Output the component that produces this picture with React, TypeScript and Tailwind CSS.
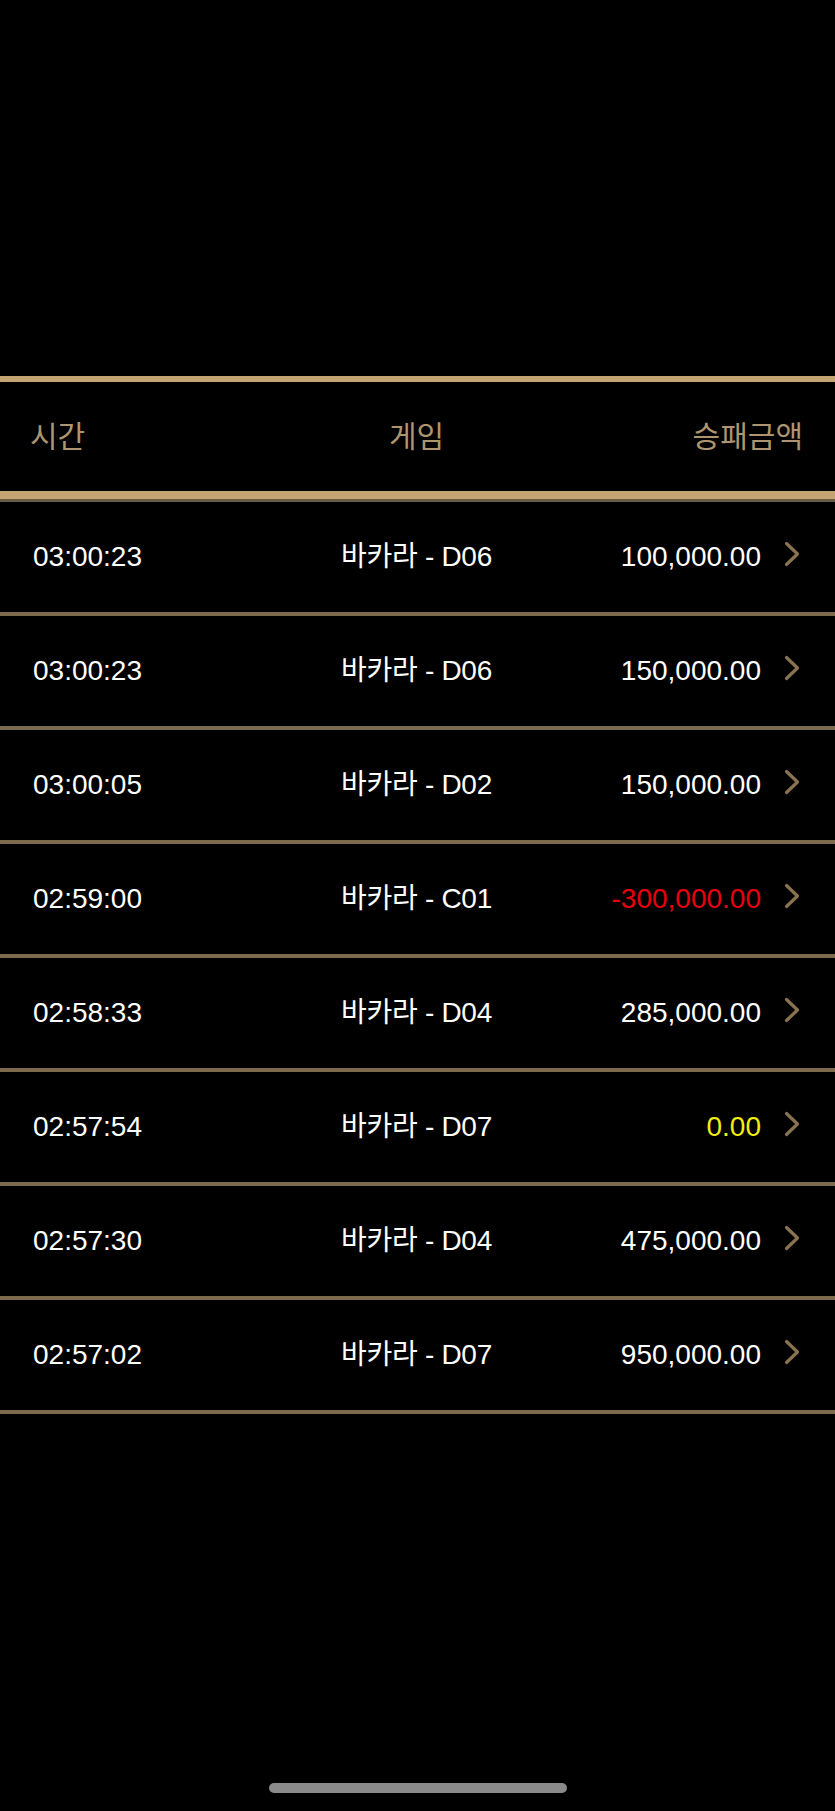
import React from "react";

type Row = { time: string; game: string; amount: string; tone: "white" | "red" | "yellow" };

const rows: Row[] = [
  { time: "03:00:23", game: "바카라 - D06", amount: "100,000.00", tone: "white" },
  { time: "03:00:23", game: "바카라 - D06", amount: "150,000.00", tone: "white" },
  { time: "03:00:05", game: "바카라 - D02", amount: "150,000.00", tone: "white" },
  { time: "02:59:00", game: "바카라 - C01", amount: "-300,000.00", tone: "red" },
  { time: "02:58:33", game: "바카라 - D04", amount: "285,000.00", tone: "white" },
  { time: "02:57:54", game: "바카라 - D07", amount: "0.00", tone: "yellow" },
  { time: "02:57:30", game: "바카라 - D04", amount: "475,000.00", tone: "white" },
  { time: "02:57:02", game: "바카라 - D07", amount: "950,000.00", tone: "white" },
];

function Chevron() {
  return (
    <svg width="16" height="26" viewBox="0 0 16 26" className="shrink-0 mb-[7px]">
      <polyline
        points="2.5,2.5 13.5,13 2.5,23.5"
        fill="none"
        stroke="#8a7350"
        strokeWidth="3.2"
        strokeLinecap="round"
        strokeLinejoin="round"
      />
    </svg>
  );
}

export default function App() {
  return (
    <div
      className="w-full h-[1811px] bg-black flex flex-col overflow-hidden"
      style={{ fontFamily: '"Liberation Sans", "Noto Sans CJK KR", sans-serif' }}
    >
      <div className="h-[376px] shrink-0" />
      <div className="h-[6px] bg-[#c4a473] shrink-0" />
      <div className="h-[109px] shrink-0 grid grid-cols-[1fr_auto_1fr] items-center pl-[30px] pr-[32px] pb-[5px] text-[30px] text-[#ad9570] font-['Noto_Sans_CJK_KR',sans-serif] leading-none">
        <div className="text-left">시간</div>
        <div className="text-center">게임</div>
        <div className="text-right">승패금액</div>
      </div>
      <div className="h-[8px] bg-[#c4a473] shrink-0" />
      <div className="h-[3px] bg-[#6a5b43] shrink-0" />
      {rows.map((r, i) => (
        <div key={i} className="shrink-0 border-b-4 border-[#7d6a4e]">
          <div className="h-[110px] grid grid-cols-[1fr_auto_1fr] items-center pl-[33px] pr-[35px] text-[28px] leading-none text-white">
            <div className="text-left">{r.time}</div>
            <div className="text-center tracking-[-0.3px]">{r.game}</div>
            <div className="flex items-center justify-end gap-[23px]">
              <span
                className={
                  r.tone === "red"
                    ? "text-[#e8000e]"
                    : r.tone === "yellow"
                    ? "text-[#f2ee12]"
                    : "text-white"
                }
              >
                {r.amount}
              </span>
              <Chevron />
            </div>
          </div>
        </div>
      ))}
      <div className="flex-1" />
      <div className="shrink-0 flex justify-center pb-[18px]">
        <div className="w-[298px] h-[10px] rounded-full bg-[#8a8a8a]" />
      </div>
    </div>
  );
}
